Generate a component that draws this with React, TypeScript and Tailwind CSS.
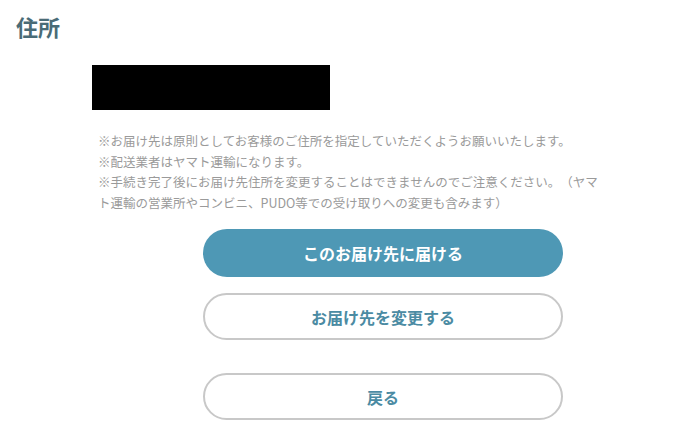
export default function App() {
  return (
    <div
      className="min-h-screen bg-white pl-4 pt-[11px] [text-spacing-trim:space-all]"
      style={{ fontFamily: '"Noto Sans CJK JP", "Noto Sans", sans-serif' }}
    >
      <h2 className="text-[22px] font-bold leading-[30px] text-[#4a6b76]">住所</h2>

      <div className="ml-[76px] mt-[24px] h-[45px] w-[238px] bg-black" />

      <div className="ml-[82px] mt-[21px] w-[508px] text-[12.5px] leading-[20.5px] text-[#9a9a9a]">
        <p>※お届け先は原則としてお客様のご住所を指定していただくようお願いいたします。</p>
        <p>※配送業者はヤマト運輸になります。</p>
        <p>
          ※手続き完了後にお届け先住所を変更することはできませんのでご注意ください。（ヤマト運輸の営業所やコンビニ、PUDO等での受け取りへの変更も含みます）
        </p>
      </div>

      <div className="ml-[187px] mt-[16px] flex w-[360px] flex-col">
        <button className="flex h-[48px] items-center justify-center rounded-full bg-[#4e98b5] text-[16px] font-bold text-white">
          このお届け先に届ける
        </button>
        <button className="mt-4 flex h-[47px] items-center justify-center rounded-full border-2 border-[#c8c8c8] bg-white text-[16px] font-bold text-[#4b8ba3]">
          お届け先を変更する
        </button>
        <button className="mt-[33px] flex h-[47px] items-center justify-center rounded-full border-2 border-[#c8c8c8] bg-white text-[16px] font-bold text-[#4b8ba3]">
          戻る
        </button>
      </div>
    </div>
  );
}
